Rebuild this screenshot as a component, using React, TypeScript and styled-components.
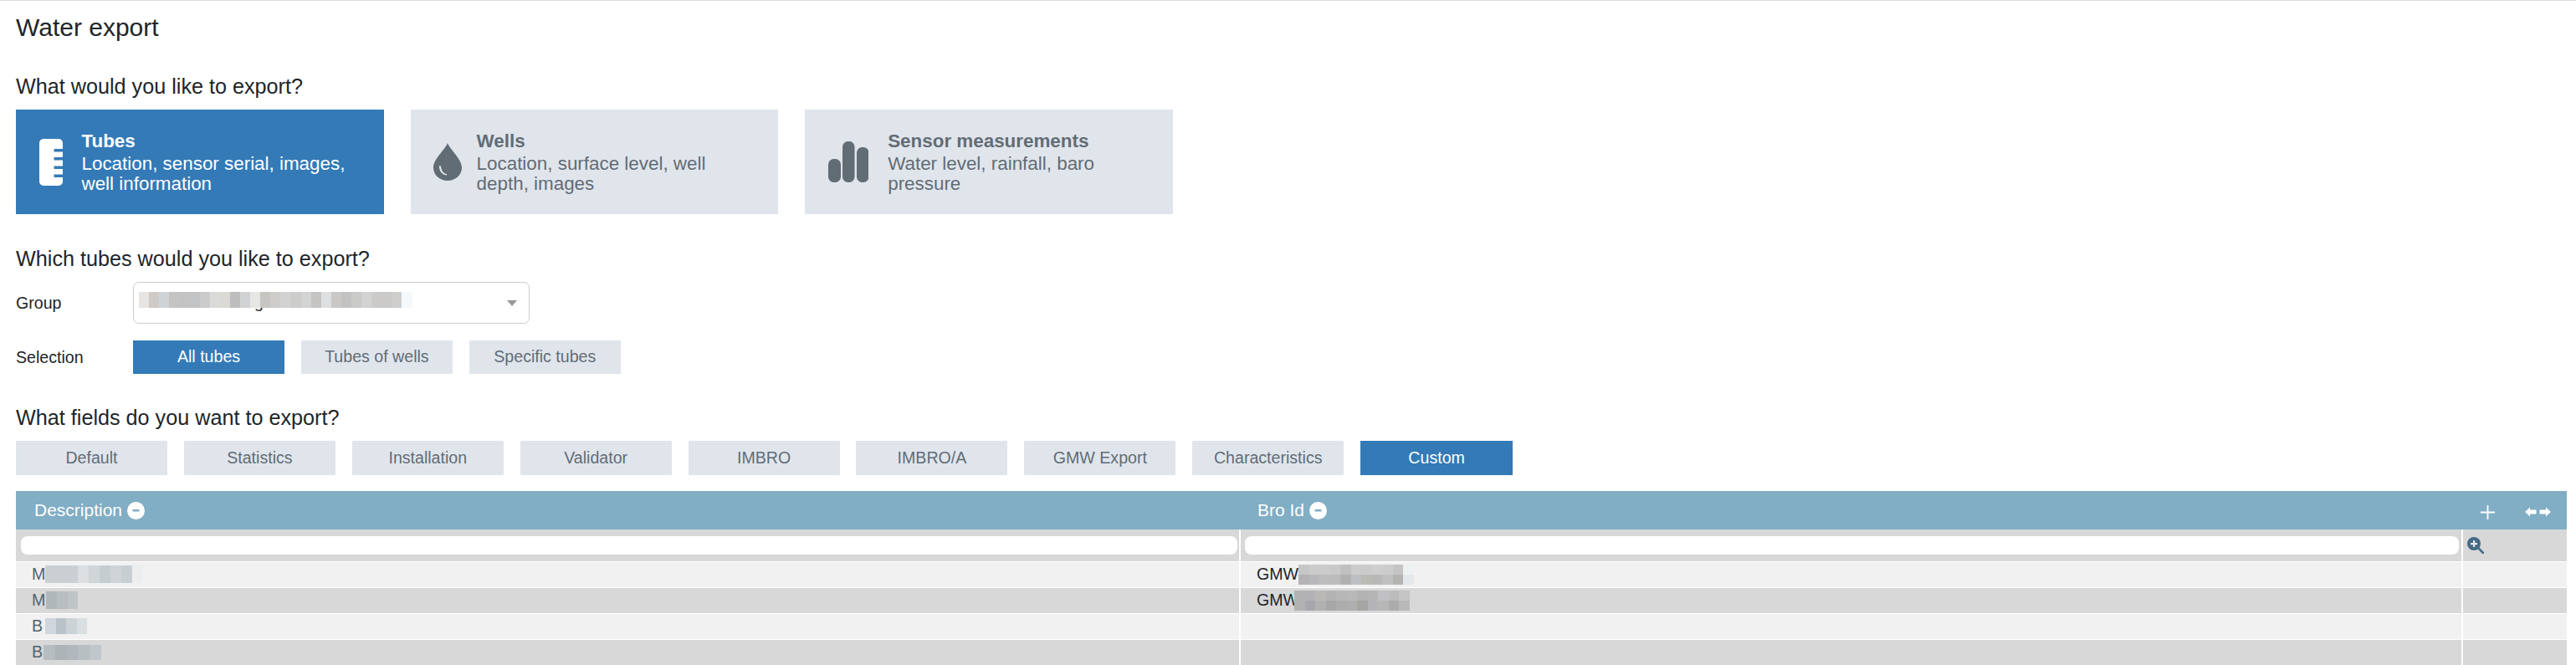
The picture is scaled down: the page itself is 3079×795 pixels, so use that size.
import styled, { createGlobalStyle } from 'styled-components';

const GlobalStyle = createGlobalStyle`
  html, body {
    margin: 0;
    padding: 0;
    background: #fff;
    font-family: "Liberation Sans", Arial, sans-serif;
    color: #212529;
  }
  * { box-sizing: border-box; }
`;

const Page = styled.div`
  border-top: 1px solid #ddd;
  padding: 12px 11px 0 19px;
  height: 795px;
  overflow: hidden;
`;

const Title = styled.h1`
  margin: 0;
  font-size: 30px;
  font-weight: 400;
  line-height: 40px;
`;

const Heading = styled.h2<{ $top: number }>`
  margin: ${({ $top }) => $top}px 0 13px;
  font-size: 25.2px;
  font-weight: 400;
  line-height: 30px;
`;

const CardRow = styled.div`
  display: flex;
  gap: 32px;
`;

const Card = styled.div<{ $active?: boolean }>`
  width: 439.6px;
  height: 125px;
  padding: 0 30px 0 28px;
  display: flex;
  align-items: center;
  background: ${({ $active }) => ($active ? '#337ab7' : '#e0e5ec')};
  color: ${({ $active }) => ($active ? '#fff' : '#626c75')};
`;

const CardIcon = styled.div<{ $width: number; $left?: number }>`
  flex: none;
  width: ${({ $width }) => $width}px;
  margin-left: ${({ $left }) => $left ?? 0}px;
  display: flex;
  fill: currentColor;
`;

const CardTitle = styled.div`
  font-size: 22.4px;
  font-weight: 700;
  line-height: 26px;
  margin-bottom: 2px;
`;

const CardText = styled.div`
  font-size: 22.4px;
  line-height: 23.5px;
`;

const FormRow = styled.div<{ $top: number }>`
  display: flex;
  align-items: center;
  margin-top: ${({ $top }) => $top}px;
`;

const Label = styled.div`
  width: 140px;
  font-size: 19.6px;
`;

const Select = styled.div`
  position: relative;
  width: 474px;
  height: 50px;
  border: 1.5px solid #ccc;
  border-radius: 7px;
  padding: 11px 0 0 144px;
  font-size: 19.6px;
  line-height: 24px;
  color: #333;
`;

const SelectBlur = styled.div`
  position: absolute;
  left: 6px;
  top: 10.5px;
`;

const Caret = styled.div`
  position: absolute;
  right: 14px;
  top: 21px;
  border-left: 6px solid transparent;
  border-right: 6px solid transparent;
  border-top: 7px solid #999;
`;

const ButtonRow = styled.div`
  display: flex;
  gap: 19.9px;
`;

const OptionButton = styled.div<{ $active?: boolean; $height: number; $lift?: number; $width?: number }>`
  width: ${({ $width }) => $width ?? 181}px;
  height: ${({ $height }) => $height}px;
  display: flex;
  align-items: center;
  justify-content: center;
  font-size: 19.6px;
  padding-bottom: ${({ $lift }) => $lift ?? 0}px;
  background: ${({ $active }) => ($active ? '#337ab7' : '#e0e5ec')};
  color: ${({ $active }) => ($active ? '#fff' : '#626c75')};
`;

const Table = styled.div`
  margin-top: 19px;
  width: 3049px;
`;

const columns = '1462px 1459px 1fr';

const HeaderRow = styled.div`
  display: grid;
  grid-template-columns: ${columns};
  column-gap: 2px;
  height: 46px;
  background: #81aec4;
  color: #fff;
  font-size: 21px;
`;

const HeaderCell = styled.div<{ $pad: number }>`
  display: flex;
  align-items: center;
  gap: 6px;
  padding-left: ${({ $pad }) => $pad}px;
`;

const HeaderTools = styled.div`
  display: flex;
  align-items: center;
  padding: 4px 0 0 21px;
  gap: 36px;
`;

const FilterRow = styled.div`
  display: grid;
  grid-template-columns: ${columns};
  column-gap: 2px;
  height: 38px;
  margin-bottom: 1px;
`;

const FilterCell = styled.div<{ $pad: string }>`
  background: #d8d8d8;
  padding: ${({ $pad }) => $pad};
`;

const FilterInput = styled.div`
  height: 22px;
  background: #fff;
  border-radius: 8px;
`;

const Rows = styled.div`
  display: flex;
  flex-direction: column;
  gap: 1.25px;
`;

const Row = styled.div`
  display: grid;
  grid-template-columns: ${columns};
  column-gap: 2px;
  height: 29.75px;
`;

const Cell = styled.div<{ $odd: boolean; $dark?: boolean }>`
  display: flex;
  align-items: center;
  padding-left: 19px;
  font-size: 19.6px;
  background: ${({ $odd }) => ($odd ? '#f1f1f1' : '#d8d8d8')};
  color: ${({ $dark }) => ($dark ? '#212529' : '#4f6474')};
`;

const Blur = styled.div<{ $cols: number; $w: number; $h: number; $shift?: number }>`
  display: grid;
  flex: none;
  grid-template-columns: repeat(${({ $cols }) => $cols}, ${({ $w }) => $w}px);
  grid-auto-rows: ${({ $h }) => $h}px;
  margin-left: ${({ $shift }) => $shift ?? 0}px;
`;

const Minus = () => (
  <svg width="21" height="21" viewBox="0 0 21 21">
    <circle cx="10.5" cy="10.5" r="10.5" fill="#fff" />
    <rect x="6.5" y="9" width="8" height="2.5" rx="0.5" fill="#81aec4" />
  </svg>
);

const TubeIcon = () => (
  <svg width="28" height="56" viewBox="0 0 28 56">
    <path
      fillRule="evenodd"
      d="M5 0h18a5 5 0 0 1 5 5v7H17.500v3.500H28v6.500H17.500v3.500H28v7H17.500v3.500H28v6.500H17.500v3.500H28V51a5 5 0 0 1-5 5H5a5 5 0 0 1-5-5V5a5 5 0 0 1 5-5z"
    />
  </svg>
);

const DropIcon = () => (
  <svg width="34" height="45" viewBox="0 0 34 45">
    <path
      fillRule="evenodd"
      d="M17 0C20 8 34 19 34 29.500 34 38 26.500 45 17 45S0 38 0 29.500C0 19 14 8 17 0zM7 28c-.2 5 3 9.500 8.500 10.500.8 0 1-1.300 0-1.500-4-1.300-6-4.500-6.500-9-.2-1.300-2-1.300-2 0z"
    />
  </svg>
);

const BarsIcon = () => (
  <svg width="48" height="49" viewBox="0 0 48 49">
    <rect x="0" y="21" width="15" height="28" rx="6.500" />
    <rect x="17" y="0" width="14.500" height="49" rx="6.500" />
    <rect x="34" y="7" width="14.500" height="42" rx="6.500" />
  </svg>
);

const PlusIcon = () => (
  <svg width="17" height="17" viewBox="0 0 17 17">
    <path d="M7.600 0h1.800v7.600H17v1.800H9.400V17H7.600V9.400H0V7.600h7.600z" fill="#fff" />
  </svg>
);

const ResizeIcon = () => (
  <svg width="31" height="12" viewBox="0 0 31 12">
    <path d="M0 6l6-5.500V3.500h7.500v5H6v3zM31 6l-6-5.500V3.500h-7.500v5H25v3z" fill="#fff" />
  </svg>
);

const SearchIcon = () => (
  <svg width="20" height="20" viewBox="0 0 20 20">
    <circle cx="8" cy="8" r="8" fill="#446a85" />
    <path d="M13 13l6 6" stroke="#446a85" strokeWidth="2.500" strokeLinecap="round" />
    <path d="M7 4h2.200v3H12v2.200H9.200V12H7V9.200H4V7h3z" fill="#e4e8ea" />
  </svg>
);

const groupBlur = [
  '#e6e5e3', '#cdcac7', '#cfd3d6', '#c6c4c2', '#c3c3c3', '#c2c3c4', '#cbcbcb', '#dadad9', '#dad9d6',
  '#bdbdbd', '#d0d2d3', '#e6e6e4', '#c6c5c2', '#cecdcb', '#d1d2d1', '#cccccb', '#d2d3d3', '#c5c4c2',
  '#dddfe1', '#c9c8c6', '#c2c2c2', '#cacac8', '#d3d3d3', '#cccbca', '#cbcac8', '#cfcecc', '#f5f8fb',
];

const gmwFirst = [
  '#c6c6c6', '#cbcbcb', '#cbcbcb', '#c9c9c9', '#c0c0c0', '#cccccc', '#cbcbcb', '#cecece', '#cccccc', '#c4c4c4', '#eef1f2',
  '#b3b3b5', '#b8b8ba', '#bdbdbd', '#bcbcbc', '#b1b1b1', '#bcc0c3', '#bbbbb6', '#b8b8b8', '#c0c0c0', '#b3b3b2', '#e4e8ea',
];

const gmwSecond = [
  '#b2b2b2', '#b1b1b6', '#b9b8b5', '#b3b3b3', '#b7b7b7', '#b8b8b8', '#b2b2b2', '#b5b5b5', '#c0c0c4', '#bcbcbc', '#c4c4c4',
  '#b2b2b2', '#a6a6ac', '#b1b1b1', '#a6a6a6', '#adadad', '#aeaeae', '#a5a5a2', '#b3b3b8', '#b7b7b7', '#ababab', '#b9b9b9',
];

const tableRows = [
  {
    letter: 'M',
    desc: ['#c9cfd2', '#c9cfd2', '#c9cfd2', '#dbdfe2', '#d0d5d8', '#c5cdd0', '#ced4d7', '#c8cfd2', '#ecefef'],
    w: 13,
    h: 21,
    shift: 0,
    bro: gmwFirst,
    broShift: 0,
  },
  { letter: 'M', desc: ['#b0b7ba', '#b8bdc0', '#bfc4c7'], w: 12.7, h: 21, shift: 1, bro: gmwSecond, broShift: -5 },
  { letter: 'B', desc: ['#cfd6dd', '#b9c2c8', '#ccd3d6', '#d9dee1'], w: 12.5, h: 19, shift: 3 },
  { letter: 'B', desc: ['#b5bdc1', '#adb4b8', '#b0b7bd', '#b7bfc2', '#c0c6c9'], w: 13.8, h: 18, shift: 1 },
];

const BlurCells = ({ colors }: { colors: string[] }) => (
  <>
    {colors.map((c, i) => (
      <div key={i} style={{ background: c }} />
    ))}
  </>
);

const fieldSets = ['Default', 'Statistics', 'Installation', 'Validator', 'IMBRO', 'IMBRO/A', 'GMW Export', 'Characteristics'];

export default function App() {
  return (
    <Page>
      <GlobalStyle />
      <Title>Water export</Title>

      <Heading $top={35}>What would you like to export?</Heading>
      <CardRow>
        <Card $active>
          <CardIcon $width={50.5}><TubeIcon /></CardIcon>
          <div>
            <CardTitle>Tubes</CardTitle>
            <CardText>Location, sensor serial, images, well information</CardText>
          </div>
        </Card>
        <Card>
          <CardIcon $width={52} $left={-1}><DropIcon /></CardIcon>
          <div>
            <CardTitle>Wells</CardTitle>
            <CardText>Location, surface level, well depth, images</CardText>
          </div>
        </Card>
        <Card>
          <CardIcon $width={71}><BarsIcon /></CardIcon>
          <div>
            <CardTitle>Sensor measurements</CardTitle>
            <CardText>Water level, rainfall, baro pressure</CardText>
          </div>
        </Card>
      </CardRow>

      <Heading $top={38}>Which tubes would you like to export?</Heading>
      <FormRow $top={0}>
        <Label>Group</Label>
        <Select>
          g
          <SelectBlur>
            <Blur $cols={27} $w={12.1} $h={19}><BlurCells colors={groupBlur} /></Blur>
          </SelectBlur>
          <Caret />
        </Select>
      </FormRow>
      <FormRow $top={20}>
        <Label>Selection</Label>
        <ButtonRow>
          <OptionButton $active $height={40} $lift={2}>All tubes</OptionButton>
          <OptionButton $height={40} $lift={2}>Tubes of wells</OptionButton>
          <OptionButton $height={40} $lift={2}>Specific tubes</OptionButton>
        </ButtonRow>
      </FormRow>

      <Heading $top={37}>What fields do you want to export?</Heading>
      <ButtonRow>
        {fieldSets.map((name) => (
          <OptionButton key={name} $height={41}>{name}</OptionButton>
        ))}
        <OptionButton $active $height={41} $width={182}>Custom</OptionButton>
      </ButtonRow>

      <Table>
        <HeaderRow>
          <HeaderCell $pad={22}>Description <Minus /></HeaderCell>
          <HeaderCell $pad={20}>Bro Id <Minus /></HeaderCell>
          <HeaderTools>
            <PlusIcon />
            <ResizeIcon />
          </HeaderTools>
        </HeaderRow>
        <FilterRow>
          <FilterCell $pad="8px 2px 0 6px"><FilterInput /></FilterCell>
          <FilterCell $pad="8px 3px 0 5px"><FilterInput /></FilterCell>
          <FilterCell $pad="9px 0 0 5px"><SearchIcon /></FilterCell>
        </FilterRow>
        <Rows>
          {tableRows.map((row, i) => (
            <Row key={i}>
              <Cell $odd={i % 2 === 0}>
                {row.letter}
                <Blur $cols={row.desc.length} $w={row.w} $h={row.h} $shift={row.shift}>
                  <BlurCells colors={row.desc} />
                </Blur>
              </Cell>
              <Cell $odd={i % 2 === 0} $dark>
                {row.bro && (
                  <>
                    GMW
                    <Blur $cols={11} $w={12.5} $h={12} $shift={row.broShift}>
                      <BlurCells colors={row.bro} />
                    </Blur>
                  </>
                )}
              </Cell>
              <Cell $odd={i % 2 === 0} />
            </Row>
          ))}
        </Rows>
      </Table>
    </Page>
  );
}
